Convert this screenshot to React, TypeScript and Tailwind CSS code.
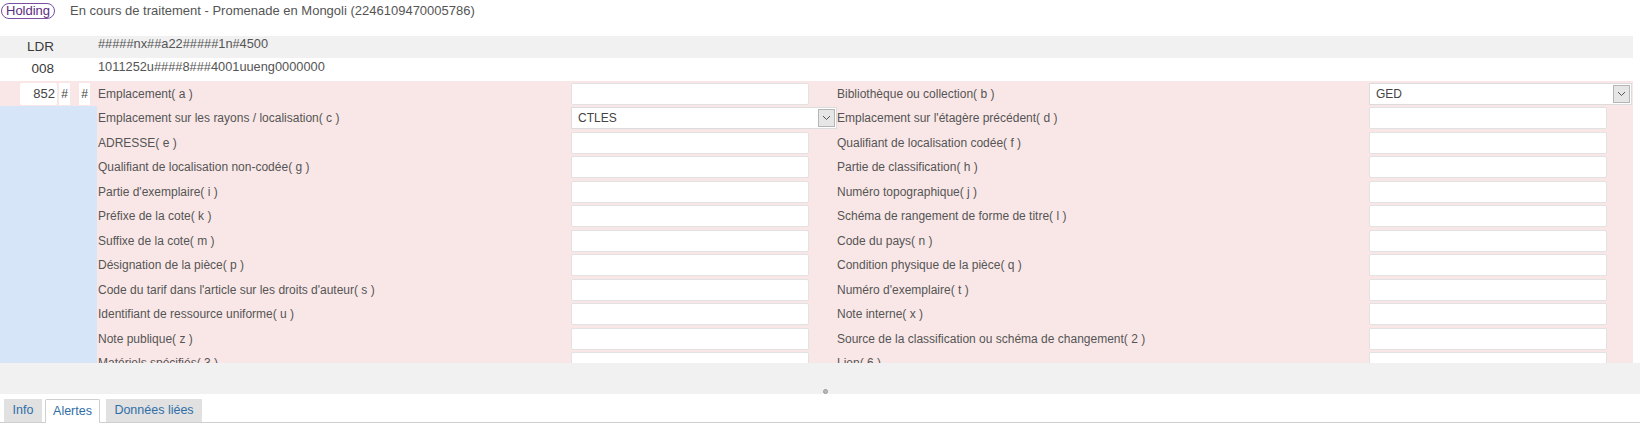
import React from 'react';

type Field = { label: string; value?: string; select?: boolean };

const rows: [Field, Field][] = [
  [{ label: 'Emplacement( a )' }, { label: 'Bibliothèque ou collection( b )', value: 'GED', select: true }],
  [{ label: 'Emplacement sur les rayons / localisation( c )', value: 'CTLES', select: true }, { label: "Emplacement sur l'étagère précédent( d )" }],
  [{ label: 'ADRESSE( e )' }, { label: 'Qualifiant de localisation codée( f )' }],
  [{ label: 'Qualifiant de localisation non-codée( g )' }, { label: 'Partie de classification( h )' }],
  [{ label: "Partie d'exemplaire( i )" }, { label: 'Numéro topographique( j )' }],
  [{ label: 'Préfixe de la cote( k )' }, { label: 'Schéma de rangement de forme de titre( l )' }],
  [{ label: 'Suffixe de la cote( m )' }, { label: 'Code du pays( n )' }],
  [{ label: 'Désignation de la pièce( p )' }, { label: 'Condition physique de la pièce( q )' }],
  [{ label: "Code du tarif dans l'article sur les droits d'auteur( s )" }, { label: "Numéro d'exemplaire( t )" }],
  [{ label: 'Identifiant de ressource uniforme( u )' }, { label: 'Note interne( x )' }],
  [{ label: 'Note publique( z )' }, { label: 'Source de la classification ou schéma de changement( 2 )' }],
  [{ label: 'Matériels spécifiés( 3 )' }, { label: 'Lien( 6 )' }],
];

function Chevron() {
  return (
    <svg width="9" height="6" viewBox="0 0 9 6" fill="none">
      <path d="M1 1l3.5 3.5L8 1" stroke="#555" strokeWidth="1" />
    </svg>
  );
}

function Input({ field }: { field: Field }) {
  if (field.select) {
    return (
      <div className="flex h-[22px] w-full items-center border border-[#dcdcdc] bg-white pl-[6px] pr-[1px]">
        <span className="flex-1 text-[12px] text-[#444]">{field.value}</span>
        <span className="flex h-[18px] w-[17px] items-center justify-center border border-[#b5b5b5] bg-[#e6e6e6]">
          <Chevron />
        </span>
      </div>
    );
  }
  return <div className="h-[22px] w-[238px] rounded-[2px] border border-[#e2e2e2] bg-white" />;
}

export default function App() {
  return (
    <div className="h-[425px] w-[1640px] overflow-hidden bg-white font-['Liberation_Sans',Arial,sans-serif] text-[12px] text-[#555]">
      <div className="flex h-[21px] items-center pt-[1px]">
        <span className="ml-[1px] rounded-full border border-[#7a4fa0] px-[4px] text-[13px] leading-[14px] text-[#5b2c83]">
          Holding
        </span>
        <span className="ml-[15px] text-[13px] text-[#555]">
          En cours de traitement - Promenade en Mongoli (2246109470005786)
        </span>
      </div>

      <div className="mt-[15px] w-[1633px]">
        <div className="flex h-[22px] items-center bg-[#f1f1f1]">
          <div className="w-[54px] text-right text-[13.5px] text-[#3a3a3a]">LDR</div>
          <div className="ml-[44px] -mt-[6px] text-[12.8px] text-[#555]">#####nx##a22#####1n#4500</div>
        </div>
        <div className="flex h-[23px] items-center bg-white">
          <div className="w-[54px] text-right text-[13.5px] text-[#3a3a3a]">008</div>
          <div className="ml-[44px] -mt-[6px] text-[12.8px] text-[#555]">1011252u####8###4001uueng0000000</div>
        </div>

        <div className="flex h-[282px] overflow-hidden">
          <div className="flex h-full w-[97px] shrink-0 items-start bg-[#d7e5f8]">
            <div className="flex h-[24.5px] w-full items-center bg-[#f9e7e7] pt-[1px]">
              <div className="ml-[20px] flex h-[22px] w-[37px] items-center justify-end rounded-[2px] bg-white pr-[2px] text-[13px] text-[#444]">
                852
              </div>
              <div className="ml-[2px] flex h-[22px] w-[11px] items-center justify-center bg-white text-[#444]">#</div>
              <div className="ml-[9px] flex h-[22px] w-[11px] items-center justify-center bg-white text-[#444]">#</div>
            </div>
          </div>
          <div className="flex-1 bg-[#f9e7e7]">
            {rows.map(([l, r], i) => (
              <div key={i} className="flex h-[24.5px] items-center pt-[1px]">
                <div className="w-[474px] pl-[1px] text-[#555]">{l.label}</div>
                <div className="flex w-[266px] items-center">
                  <Input field={l} />
                </div>
                <div className="w-[532px] text-[#555]">{r.label}</div>
                <div className="flex w-[263px] items-center">
                  <Input field={r} />
                </div>
              </div>
            ))}
          </div>
        </div>
      </div>

      <div className="relative h-[31px] w-full bg-[#f1f1f1]">
        <span className="absolute left-[823px] top-[26px] h-[5px] w-[5px] rounded-full border border-[#999] bg-[#bbb]" />
      </div>

      <div className="mt-[5px] flex h-[24px] items-end gap-[3px] border-b border-[#cfcfcf] pl-[4px]">
        <div className="flex h-[23px] w-[38px] items-center justify-center bg-[#e1e1e1] text-[12.5px] text-[#2f6fa7]">Info</div>
        <div className="-mb-[1px] flex h-[24px] w-[55px] items-center justify-center rounded-t-[2px] border border-b-0 border-[#cfcfcf] bg-white text-[12.5px] text-[#2f6fa7]">
          Alertes
        </div>
        <div className="ml-[3px] flex h-[23px] w-[96px] items-center justify-center bg-[#e1e1e1] text-[12.5px] text-[#2f6fa7]">
          Données liées
        </div>
      </div>
    </div>
  );
}
